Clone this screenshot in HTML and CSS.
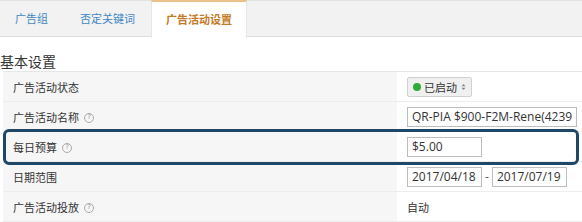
FILE: index.html
```html
<!DOCTYPE html>
<html>
<head>
<meta charset="utf-8">
<link rel="stylesheet" href="styles.css">
</head>
<body>
<div class="page">
  <div class="tabs">
    <div class="tab">广告组</div>
    <div class="tab">否定关键词</div>
    <div class="tab active">广告活动设置</div>
  </div>
  <div class="heading">基本设置</div>
  <div class="table">
    <div class="row">
      <div class="label">广告活动状态</div>
      <div class="value"><span class="status"><span class="dot"></span>已启动<span class="arrows"><svg width="5" height="8" viewBox="0 0 5 8"><path d="M0.5 3.2 L2.5 1 L4.5 3.2 Z M0.5 4.8 L2.5 7 L4.5 4.8 Z" fill="#888"/></svg></span></span></div>
    </div>
    <div class="row">
      <div class="label">广告活动名称<span class="help">?</span></div>
      <div class="value"><span class="input wide">QR-PIA $900-F2M-Rene(4239</span></div>
    </div>
    <div class="row">
      <div class="label">每日预算<span class="help">?</span></div>
      <div class="value"><span class="input short">$5.00</span></div>
    </div>
    <div class="row">
      <div class="label">日期范围</div>
      <div class="value"><span class="input short">2017/04/18</span><span class="dash">-</span><span class="input short">2017/07/19</span></div>
    </div>
    <div class="row">
      <div class="label">广告活动投放<span class="help">?</span></div>
      <div class="value"><span class="plain">自动</span></div>
    </div>
    <div class="highlight"></div>
  </div>
</div>
</body>
</html>
```
FILE: styles.css
```css
html, body {
  margin: 0;
  padding: 0;
  background: #fff;
}
body {
  font-family: "Noto Sans CJK SC", "Open Sans", sans-serif;
  color: #333;
  width: 582px;
  height: 222px;
  overflow: hidden;
}
.tabs {
  display: flex;
  height: 35px;
  background: #f2f2f2;
  border-top: 1px solid #e2e2e2;
  border-bottom: 1px solid #dedede;
}
.tab {
  font-size: 11px;
  color: #3f87c3;
  padding: 0 15px;
  line-height: 35px;
  margin-right: 2px;
}
.tab.active {
  background: #fff;
  color: #c27a27;
  font-weight: bold;
  border-top: 2px solid #e9c38a;
  margin-top: -1px;
  line-height: 34px;
  height: 36px;
  margin-bottom: -1px;
  border-left: 1px solid #e6e6e6;
  border-right: 1px solid #e6e6e6;
  padding: 0 14px;
  margin-left: -1px;
}
.heading {
  font-size: 14px;
  line-height: 20px;
  margin-top: 14px;
  color: #333;
  height: 20px;
}
.table {
  position: relative;
  margin-left: 3px;
  border-top: 1px solid #e6e6e6;
}
.row {
  display: flex;
  height: 29px;
  border-bottom: 1px solid #ececec;
}
.label {
  width: 384px;
  background: #f6f6f6;
  font-size: 11px;
  padding-left: 10px;
  display: flex;
  align-items: center;
  color: #333;
}
.value {
  flex: 1;
  display: flex;
  align-items: center;
  padding-left: 10px;
  background: #fff;
  font-family: "Open Sans", "Noto Sans CJK SC", sans-serif;
}
.help {
  display: inline-flex;
  align-items: center;
  justify-content: center;
  width: 8px;
  height: 8px;
  border: 1px solid #aaa;
  border-radius: 50%;
  font-size: 7px;
  color: #999;
  margin-left: 5px;
  margin-top: 2px;
  line-height: 1;
  font-family: "DejaVu Sans", sans-serif;
}
.status {
  display: inline-flex;
  align-items: center;
  height: 18px;
  padding: 0 5px 0 5px;
  border: 1px solid #d0d0d0;
  border-radius: 2px;
  background: #f0f0f0;
  font-size: 11px;
  font-family: "Noto Sans CJK SC", sans-serif;
  color: #333;
}
.dot {
  width: 8px;
  height: 8px;
  border-radius: 50%;
  background: #2eab3a;
  margin-right: 3px;
}
.arrows {
  display: inline-flex;
  margin-left: 4px;
}
.input {
  display: inline-flex;
  align-items: center;
  border: 1px solid #bdbdbd;
  background: #fff;
  font-size: 12px;
  color: #333;
  padding: 0 4px;
  overflow: hidden;
  white-space: nowrap;
  box-sizing: border-box;
  height: 20px;
}
.wide {
  width: 170px;
}
.short {
  width: 75px;
}
.dash {
  font-size: 12px;
  margin: 0 3px;
  color: #555;
}
.plain {
  font-size: 11px;
  font-family: "Noto Sans CJK SC", sans-serif;
  color: #333;
}
.highlight {
  position: absolute;
  left: 0;
  top: 57px;
  width: 576px;
  height: 36px;
  box-sizing: border-box;
  border: 3px solid #1f4768;
  border-radius: 6px;
}
```
